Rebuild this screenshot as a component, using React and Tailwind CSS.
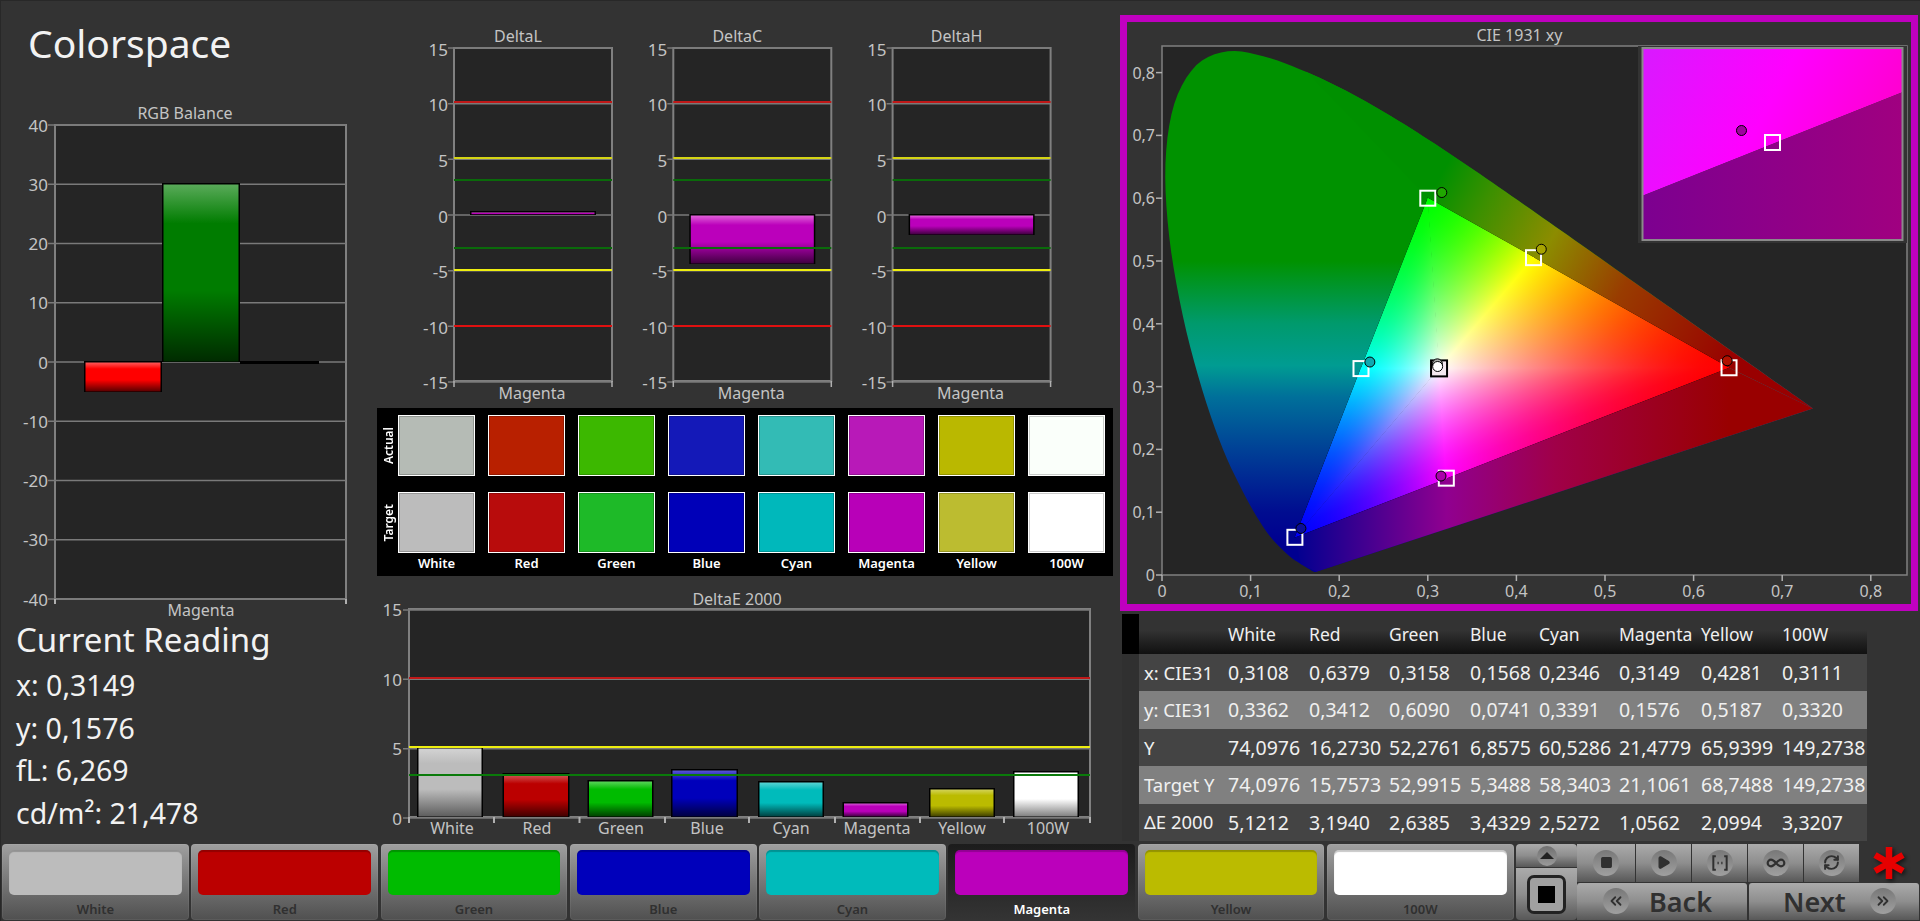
import { ChevronsLeft, ChevronsRight, Infinity as InfinityIcon, Play, RefreshCw, Square } from 'lucide-react'

const NAMES = ['White', 'Red', 'Green', 'Blue', 'Cyan', 'Magenta', 'Yellow', '100W']
const COLORS = ['#bcbcbc', '#bb0000', '#00bb00', '#0000bb', '#00bbbb', '#bb00bb', '#bbbb00', '#ffffff']
const ACTUAL = ['#b5bbb5', '#b82000', '#3cb800', '#1419b8', '#33bbb5', '#b819b8', '#bab800', '#fafffa']
const TARGET = ['#bcbcbc', '#b80c0c', '#1eba28', '#0000b8', '#00b8bb', '#b800b8', '#bcbc30', '#ffffff']

const TABLE = [
  ['x: CIE31', '0,3108', '0,6379', '0,3158', '0,1568', '0,2346', '0,3149', '0,4281', '0,3111'],
  ['y: CIE31', '0,3362', '0,3412', '0,6090', '0,0741', '0,3391', '0,1576', '0,5187', '0,3320'],
  ['Y', '74,0976', '16,2730', '52,2761', '6,8575', '60,5286', '21,4779', '65,9399', '149,2738'],
  ['Target Y', '74,0976', '15,7573', '52,9915', '5,3488', '58,3403', '21,1061', '68,7488', '149,2738'],
  ['ΔE 2000', '5,1212', '3,1940', '2,6385', '3,4329', '2,5272', '1,0562', '2,0994', '3,3207'],
]

// CIE 1931 spectral locus
const LOCUS_RAW = [
  [0.1741, 0.005], [0.1733, 0.0048], [0.1714, 0.0051], [0.1689, 0.0069], [0.1644, 0.0109], [0.1566, 0.0177],
  [0.144, 0.0297], [0.1241, 0.0578], [0.1096, 0.0868], [0.0913, 0.1327], [0.0687, 0.2007], [0.0454, 0.295],
  [0.0235, 0.4127], [0.0082, 0.5384], [0.0039, 0.6548], [0.0139, 0.7502], [0.0389, 0.812], [0.0743, 0.8338],
  [0.1142, 0.8262], [0.1547, 0.8059], [0.1929, 0.7816], [0.2296, 0.7543], [0.2658, 0.7243], [0.3016, 0.6923],
  [0.3373, 0.6589], [0.3731, 0.6245], [0.4087, 0.5896], [0.4441, 0.5547], [0.4788, 0.5202], [0.5125, 0.4866],
  [0.5448, 0.4544], [0.5752, 0.4242], [0.6029, 0.3965], [0.627, 0.3725], [0.6658, 0.334], [0.6915, 0.3083],
  [0.7079, 0.292], [0.726, 0.274], [0.7347, 0.2653],
]

// catmull-rom between the table points, the rim looks faceted otherwise
const smooth = (list) => {
  const out = []
  for (let i = 0; i < list.length - 1; i++) {
    const p0 = list[Math.max(i - 1, 0)]
    const p1 = list[i]
    const p2 = list[i + 1]
    const p3 = list[Math.min(i + 2, list.length - 1)]
    for (let s = 0; s < 5; s++) {
      const t = s / 5
      out.push([0, 1].map((k) =>
        0.5 * (2 * p1[k] + (p2[k] - p0[k]) * t + (2 * p0[k] - 5 * p1[k] + 4 * p2[k] - p3[k]) * t * t + (3 * p1[k] - p0[k] - 3 * p2[k] + p3[k]) * t * t * t),
      ))
    }
  }
  out.push(list[list.length - 1])
  return out
}

const LOCUS = smooth(LOCUS_RAW)

const cieX = (x) => 1162 + 886 * x
const cieY = (y) => 575 - 628 * y
const toPx = ([x, y]) => [cieX(x), cieY(y)]
const points = (list) => list.map((p) => toPx(p).join(',')).join(' ')

const WHITE = [0.3127, 0.329]
const R = [0.64, 0.33]
const G = [0.3, 0.6]
const B = [0.15, 0.06]
const C = [0.2246, 0.3287]
const M = [0.3209, 0.1542]
const Y = [0.4193, 0.5053]

// foot of the perpendicular, in page pixels: that is the space the gradients live in
const footOn = (p, a, b) => {
  const t = ((p[0] - a[0]) * (b[0] - a[0]) + (p[1] - a[1]) * (b[1] - a[1])) / ((b[0] - a[0]) ** 2 + (b[1] - a[1]) ** 2)
  return [a[0] + t * (b[0] - a[0]), a[1] + t * (b[1] - a[1])]
}

const channelColor = (channel, v) => {
  const n = Math.round(255 * v)
  return `rgb(${channel === 'r' ? n : 0},${channel === 'g' ? n : 0},${channel === 'b' ? n : 0})`
}

const GAMMA = 1.6

// each sector of the gamut: primary, neighbouring secondary, and the channels they switch on
const makeSector = (id, prim, sec, p, q, r) => {
  const [a, b, c] = [toPx(prim), toPx(sec), toPx(WHITE)]
  const cx = (a[0] + b[0] + c[0]) / 3
  const cy = (a[1] + b[1] + c[1]) / 3
  const grown = [a, b, c].map(([x, y]) => {
    const d = Math.hypot(x - cx, y - cy)
    return [x + ((x - cx) / d) * 0.8, y + ((y - cy) / d) * 0.8].join(',')
  })
  return {
    id,
    shape: grown.join(' '),
    fills: { [p]: channelColor(p, 1), [q]: `url(#${id}-q)`, [r]: `url(#${id}-r)` },
    ramps: [
      { id: `${id}-q`, channel: q, from: a, to: footOn(a, b, c) },
      { id: `${id}-r`, channel: r, from: footOn(c, a, b), to: c },
    ],
  }
}

const SECTORS = [
  makeSector('s1', R, Y, 'r', 'g', 'b'),
  makeSector('s2', G, Y, 'g', 'r', 'b'),
  makeSector('s3', G, C, 'g', 'b', 'r'),
  makeSector('s4', B, C, 'b', 'g', 'r'),
  makeSector('s5', B, M, 'b', 'r', 'g'),
  makeSector('s6', R, M, 'r', 'b', 'g'),
]

const mix = (hex, target, amount) => {
  const part = (i) => parseInt(hex.slice(i, i + 2), 16)
  const out = [1, 3, 5].map((i) => Math.round(part(i) + (target - part(i)) * amount))
  return `rgb(${out.join(',')})`
}

const Label = ({ x, y, anchor = 'middle', className = 'fill-[#c4c4c4] text-[16px]', children }) => (
  <text x={x} y={y} textAnchor={anchor} dominantBaseline="central" className={className}>
    {children}
  </text>
)

const BarGradients = ({ prefix, colors, dark = 0.65 }) => (
  <defs>
    {colors.map((color, i) => (
      <linearGradient key={i} id={`${prefix}-${i}`} x1="0" y1="0" x2="0" y2="1">
        <stop offset="0" stopColor={mix(color, 255, 0.35)} />
        <stop offset="0.22" stopColor={color} />
        <stop offset="0.6" stopColor={color} />
        <stop offset="1" stopColor={mix(color, 0, color === '#ffffff' || color === '#bcbcbc' ? 0.5 : dark)} />
      </linearGradient>
    ))}
  </defs>
)

const Bar = ({ x, y, w, h, fill }) => (
  <g>
    <rect x={x} y={y} width={w} height={h} fill="#000" />
    <rect x={x + 1.5} y={y + 1.5} width={w - 3} height={h - 2} fill={fill} />
  </g>
)

const RgbBalance = () => {
  const yAt = (v) => 362 - v * 5.925
  return (
    <svg viewBox="0 100 375 520" className="h-[520px] w-[375px]">
      <BarGradients prefix="rgb" colors={['#ff0000', '#007c00']} />
      <Label x={185} y={113}>RGB Balance</Label>
      <rect x={55} y={125} width={291} height={474} fill="#252525" stroke="#808080" strokeWidth="2" />
      {[40, 30, 20, 10, 0, -10, -20, -30, -40].map((v) => (
        <g key={v}>
          <line x1={48} x2={346} y1={yAt(v)} y2={yAt(v)} stroke="#7a7a7a" strokeWidth="1.5" />
          <Label x={48} y={yAt(v)} anchor="end" className="fill-[#c4c4c4] text-[17px]">{v}</Label>
        </g>
      ))}
      <line x1={55} x2={55} y1={599} y2={604} stroke="#b0b0b0" strokeWidth="2" />
      <line x1={346} x2={346} y1={599} y2={604} stroke="#b0b0b0" strokeWidth="2" />
      <Bar x={84} y={361} w={78} h={31} fill="url(#rgb-0)" />
      <Bar x={162} y={183} w={78} h={179} fill="url(#rgb-1)" />
      <rect x={240} y={361} width={79} height={3} fill="#000" />
      <Label x={201} y={610}>Magenta</Label>
    </svg>
  )
}

const DeltaChart = ({ index, title, barY, barH }) => {
  const left = 454 + index * 219.3
  const right = left + 158
  const yAt = (v) => 215 - v * 11.13
  const origin = 393 + index * 219
  return (
    <svg viewBox={`${origin} 0 219 400`} className="h-[400px] w-[219px] overflow-visible">
      <defs>
        <linearGradient id={`delta-${index}`} x1="0" y1="0" x2="0" y2="1">
          <stop offset="0" stopColor="#e060d8" />
          <stop offset="0.2" stopColor="#bb00bb" />
          <stop offset="0.55" stopColor="#bb00bb" />
          <stop offset="1" stopColor="#400040" />
        </linearGradient>
      </defs>
      <Label x={left + 64} y={36}>{title}</Label>
      <rect x={left} y={48} width={158} height={333} fill="#252525" stroke="#808080" strokeWidth="2" />
      {[15, 10, 5, 0, -5, -10, -15].map((v) => (
        <g key={v}>
          <line x1={left - 6} x2={right} y1={yAt(v)} y2={yAt(v)} stroke="#7a7a7a" strokeWidth="1.5" />
          <Label x={left - 6} y={yAt(v) + 1} anchor="end" className="fill-[#c4c4c4] text-[17px]">{v}</Label>
        </g>
      ))}
      <line x1={left} x2={left} y1={381} y2={387} stroke="#b0b0b0" strokeWidth="1.5" />
      <line x1={right} x2={right} y1={381} y2={387} stroke="#b0b0b0" strokeWidth="1.5" />
      <Bar x={left + 16} y={barY} w={126} h={barH} fill={`url(#delta-${index})`} />
      <line x1={left} x2={right} y1={102} y2={102} stroke="#c01818" strokeWidth="2" />
      <line x1={left} x2={right} y1={158} y2={158} stroke="#d4d414" strokeWidth="2" />
      <line x1={left} x2={right} y1={180} y2={180} stroke="#0a6a0a" strokeWidth="2" />
      <line x1={left} x2={right} y1={248} y2={248} stroke="#0a6a0a" strokeWidth="2" />
      <line x1={left} x2={right} y1={270} y2={270} stroke="#eeee10" strokeWidth="2" />
      <line x1={left} x2={right} y1={326} y2={326} stroke="#e01010" strokeWidth="2" />
      <Label x={left + 78} y={393}>Magenta</Label>
    </svg>
  )
}

const Swatches = () => (
  <div className="ml-[2px] mt-[8px] flex h-[168px] w-[736px] bg-black pt-[7px] font-semibold text-white">
    <div className="flex w-[21px] flex-col gap-[16px] pl-[2px]">
      {['Actual', 'Target'].map((name) => (
        <div key={name} className="flex h-[61px] items-center justify-center">
          <span className="rotate-180 text-[12px] leading-none [writing-mode:vertical-lr]">{name}</span>
        </div>
      ))}
    </div>
    <div className="grid grid-cols-[repeat(8,77px)] grid-rows-[61px_61px_auto] gap-x-[13px] gap-y-[16px]">
      {ACTUAL.map((c, i) => (
        <div key={i} className="border border-white shadow-[inset_0_0_0_1px_rgba(0,0,0,0.2)]" style={{ backgroundColor: c }} />
      ))}
      {TARGET.map((c, i) => (
        <div key={i} className="border border-white shadow-[inset_0_0_0_1px_rgba(0,0,0,0.2)]" style={{ backgroundColor: c }} />
      ))}
      {NAMES.map((name) => (
        <div key={name} className="-mt-[16px] pt-[1px] text-center text-[13px] leading-[18px]">{name}</div>
      ))}
    </div>
  </div>
)

const DeltaE = () => {
  const bars = [
    [417, 66, 747], [502.5, 67, 773], [587.5, 66, 780], [671, 67, 769],
    [758, 66, 781], [842.5, 66, 802], [929, 66, 788], [1013, 66, 771],
  ]
  const ticks = [409, 494, 579.5, 665, 749, 835, 920, 1004, 1090]
  const labels = [452, 537, 621, 707, 791, 877, 962, 1048]
  const yAt = (v) => 817 - v * 13.87
  return (
    <svg viewBox="375 580 745 263" className="mt-[4px] h-[263px] w-[745px]">
      <BarGradients prefix="de" colors={COLORS} />
      <Label x={737} y={599}>DeltaE 2000</Label>
      <rect x={409} y={609} width={681} height={208} fill="#252525" stroke="#808080" strokeWidth="2" />
      {[15, 10, 5, 0].map((v) => (
        <g key={v}>
          <line x1={403} x2={1090} y1={yAt(v) + 1} y2={yAt(v) + 1} stroke="#7a7a7a" strokeWidth="1.5" />
          <Label x={402} y={yAt(v) + 1} anchor="end" className="fill-[#c4c4c4] text-[17px]">{v}</Label>
        </g>
      ))}
      {ticks.map((x) => (
        <line key={x} x1={x} x2={x} y1={817} y2={823} stroke="#b0b0b0" strokeWidth="2" />
      ))}
      {bars.map(([x, w, top], i) => (
        <Bar key={i} x={x} y={top} w={w} h={817 - top} fill={`url(#de-${i})`} />
      ))}
      <line x1={409} x2={1090} y1={678} y2={678} stroke="#c01818" strokeWidth="2" />
      <line x1={409} x2={1090} y1={747} y2={747} stroke="#eeee10" strokeWidth="2" />
      <line x1={409} x2={1090} y1={775} y2={775} stroke="#0a7a0a" strokeWidth="2" />
      {NAMES.map((name, i) => (
        <Label key={name} x={labels[i]} y={828}>{name}</Label>
      ))}
    </svg>
  )
}

const TargetBox = ({ x, y, fill = 'none' }) => (
  <rect x={x - 7.5} y={y - 7.5} width={15} height={15} fill={fill} stroke="#fff" strokeWidth="2" />
)

const ramp = (r) => (
  <linearGradient key={r.id} id={r.id} gradientUnits="userSpaceOnUse" x1={r.from[0]} y1={r.from[1]} x2={r.to[0]} y2={r.to[1]}>
    {[0, 0.1, 0.2, 0.3, 0.4, 0.5, 0.6, 0.7, 0.8, 0.9, 1].map((t) => (
      <stop key={t} offset={t} stopColor={channelColor(r.channel, t ** GAMMA)} />
    ))}
  </linearGradient>
)

const CieChart = () => {
  const targets = [R, G, B, C, M, Y]
  const readings = [
    [0.3108, 0.3362, '#a8aca8'], [0.6379, 0.3412, '#b01000'], [0.3158, 0.609, '#20a800'], [0.1568, 0.0741, '#0a0e98'],
    [0.2346, 0.3391, '#10a8b0'], [0.3149, 0.1576, '#aa00aa'], [0.4281, 0.5187, '#a8a400'], [0.3111, 0.332, '#ffffff'],
  ]
  const ticks = [0, 0.1, 0.2, 0.3, 0.4, 0.5, 0.6, 0.7, 0.8]
  const tickText = (v) => (v === 0 ? '0' : v.toFixed(1).replace('.', ','))
  const upper = [G, ...LOCUS.filter((p, i) => i > LOCUS.length / 2), R]
  const lower = [B, [0.1566, 0.0177], LOCUS[0], LOCUS[LOCUS.length - 1], R]
  return (
    <svg viewBox="1127 22 784 582" className="h-[582px] w-[784px]">
      <defs>
        {SECTORS.flatMap((s) => s.ramps).map(ramp)}
        <linearGradient id="outer-left" gradientUnits="userSpaceOnUse" x1="0" x2="0" y1={cieY(0.5)} y2={cieY(0.05)}>
          <stop offset="0" stopColor="#009200" />
          <stop offset="0.22" stopColor="#009a6c" />
          <stop offset="0.37" stopColor="#009c92" />
          <stop offset="0.48" stopColor="#00709a" />
          <stop offset="0.67" stopColor="#004096" />
          <stop offset="0.89" stopColor="#000c90" />
          <stop offset="1" stopColor="#000090" />
        </linearGradient>
        <linearGradient id="outer-top" gradientUnits="userSpaceOnUse" x1={cieX(G[0])} y1={cieY(G[1])} x2={cieX(R[0])} y2={cieY(R[1])}>
          <stop offset="0" stopColor="#009000" />
          <stop offset="0.15" stopColor="#3c9000" />
          <stop offset="0.37" stopColor="#8c8c00" />
          <stop offset="0.62" stopColor="#993c00" />
          <stop offset="1" stopColor="#990000" />
        </linearGradient>
        <linearGradient id="outer-low" gradientUnits="userSpaceOnUse" x1={cieX(B[0])} y1={0} x2={cieX(R[0])} y2={0}>
          <stop offset="0" stopColor="#000090" />
          <stop offset="0.35" stopColor="#900090" />
          <stop offset="0.6" stopColor="#a00048" />
          <stop offset="1" stopColor="#990000" />
        </linearGradient>
        <linearGradient id="inset-top" x1="0" y1="0" x2="1" y2="0.3">
          <stop offset="0" stopColor="#d81aff" />
          <stop offset="0.55" stopColor="#ff00ff" />
          <stop offset="1" stopColor="#ff00d0" />
        </linearGradient>
        <linearGradient id="inset-low" x1="0" y1="0" x2="1" y2="0">
          <stop offset="0" stopColor="#7c0090" />
          <stop offset="1" stopColor="#a00080" />
        </linearGradient>
      </defs>
      <Label x={1519.5} y={35}>CIE 1931 xy</Label>
      <rect x={1162} y={46} width={745} height={529} fill="#252525" stroke="#808080" strokeWidth="1.5" />
      {ticks.map((v) => (
        <g key={v}>
          <line x1={1156} x2={1162} y1={cieY(v)} y2={cieY(v)} stroke="#b0b0b0" strokeWidth="1.5" />
          <line x1={cieX(v)} x2={cieX(v)} y1={575} y2={581} stroke="#b0b0b0" strokeWidth="1.5" />
          <Label x={1155} y={cieY(v)} anchor="end">{tickText(v)}</Label>
          <Label x={cieX(v)} y={591}>{tickText(v)}</Label>
        </g>
      ))}
      <polygon points={points(LOCUS)} fill="url(#outer-left)" />
      <polygon points={points(upper)} fill="url(#outer-top)" />
      <polygon points={points(lower)} fill="url(#outer-low)" />
      <g className="isolate">
        <polygon points={points([R, G, B])} fill="#000" />
        {['r', 'g', 'b'].map((channel) => (
          <g key={channel} className="mix-blend-screen">
            {SECTORS.map((s) => (
              <polygon key={s.id} points={s.shape} fill={s.fills[channel]} />
            ))}
          </g>
        ))}
      </g>
      {targets.map(([x, y]) => (
        <TargetBox key={x} x={cieX(x)} y={cieY(y)} />
      ))}
      <rect x={cieX(0.3127) - 8} y={cieY(0.329) - 8} width={16} height={16} fill="#f4e8f0" stroke="#000" strokeWidth="2" />
      {readings.map(([x, y, c]) => (
        <circle key={x} cx={cieX(x)} cy={cieY(y)} r={5} fill={c} stroke="#000" strokeWidth="1" />
      ))}
      <rect x={1638} y={46} width={269} height={197} fill="#333" />
      <polygon points="1642,48 1903,48 1903,92 1642,196" fill="url(#inset-top)" />
      <polygon points="1642,196 1903,92 1903,240 1642,240" fill="url(#inset-low)" />
      <rect x={1642.5} y={48} width={260} height={192} fill="none" stroke="#8a8a8a" strokeWidth="2" />
      <circle cx={1741.5} cy={130.5} r={5} fill="#a000a0" stroke="#000" strokeWidth="1" />
      <TargetBox x={1772.5} y={142.5} />
    </svg>
  )
}

const GRID = 'grid grid-cols-[17px_89px_81px_80px_81px_69px_80px_82px_81px_85px]'

const ReadingTable = () => (
  <div className="ml-[2px] mt-[3px] w-[745px] text-[19.5px] text-[#f0f0f0]">
    <div className={`${GRID} h-[40px] items-center bg-linear-to-b from-[#333333] from-40% to-[#111111] text-[17.5px]`}>
      <div className="h-full bg-black" />
      <div />
      {NAMES.map((name) => (
        <div key={name}>{name}</div>
      ))}
    </div>
    {TABLE.map((row, i) => (
      <div key={row[0]} className={`${GRID} h-[37.4px] items-center ${i % 2 ? 'bg-[#808080]' : 'bg-[#444444]'}`}>
        <div className="h-full bg-[#303030]" />
        {row.map((cell, j) => (
          <div key={j} className={j === 0 ? 'pl-[5px] text-[18.5px]' : ''}>{cell}</div>
        ))}
      </div>
    ))}
  </div>
)

const ColorButton = ({ name, color, active }) => (
  <div
    className={`flex w-[187px] flex-col items-center rounded-[4px] px-[7px] pt-[6px] ${
      active
        ? 'bg-linear-to-b from-[#1c1c1c] to-[#343434] text-white'
        : 'bg-linear-to-b from-[#a0a0a0] to-[#505050] text-[#303030] shadow-[inset_0_0_0_1px_rgba(255,255,255,0.06)]'
    }`}
  >
    <div className="h-[45px] w-full rounded-[5px] shadow-[inset_0_2px_1px_rgba(0,0,0,0.22)]" style={{ backgroundColor: color }} />
    <div className="mt-[6px] text-[13px] font-semibold leading-[16px]">{name}</div>
  </div>
)

const Knob = ({ children, className = '' }) => (
  <span className={`flex size-[26px] shrink-0 items-center justify-center rounded-full bg-linear-to-b from-[#787878] to-[#a0a0a0] text-[#303030] ${className}`}>
    {children}
  </span>
)

const metal = 'bg-linear-to-b from-[#ababab] via-[#8e8e8e] to-[#585858]'

const FitIcon = () => (
  <svg viewBox="0 0 24 24" className="size-[20px]" fill="none" stroke="currentColor" strokeWidth="2.4">
    <path d="M7 4H4v16h3M17 4h3v16h-3" />
    <path d="M9 12h1.5M13.5 12H15" strokeWidth="3" />
  </svg>
)

const Asterisk = () => (
  <svg viewBox="0 0 34 34" className="size-[34px] drop-shadow-[2px_2px_2px_rgba(0,0,0,0.6)]" stroke="#e60000" strokeWidth="6.5">
    <path d="M17 1v32M3 9l28 16M3 25L31 9" />
  </svg>
)

const Controls = () => (
  <div className="flex text-[#303030]">
    <div className="flex w-[61px] flex-col gap-[1px]">
      <div className={`flex h-[23px] items-center justify-center rounded-t-[4px] ${metal}`}>
        <span className="flex size-[20px] items-center justify-center rounded-full bg-linear-to-b from-[#707070] to-[#9a9a9a]">
          <span className="h-0 w-0 border-x-[7px] border-b-[7px] border-x-transparent border-b-[#222222]" />
        </span>
      </div>
      <div className={`flex flex-1 items-center justify-center rounded-b-[4px] ${metal}`}>
        <span className="flex size-[39px] items-center justify-center rounded-[7px] border-[3px] border-[#222222] bg-[#a0a0a0]">
          <span className="size-[17px] bg-black" />
        </span>
      </div>
    </div>
    <div className="flex w-[343px] flex-col gap-[1px]">
      <div className="flex h-[38px] gap-[1px]">
        {[
          <Square key="s" size={13} fill="currentColor" />,
          <Play key="p" size={15} fill="currentColor" />,
          <FitIcon key="f" />,
          <InfinityIcon key="i" size={20} strokeWidth={2.6} />,
          <RefreshCw key="r" size={17} strokeWidth={2.8} />,
        ].map((icon, i) => (
          <div key={i} className={`flex items-center justify-center ${i === 0 ? 'w-[58px]' : 'w-[55px]'} ${metal}`}>
            <Knob>{icon}</Knob>
          </div>
        ))}
        <div className="flex flex-1 items-center justify-center pr-[3px]">
          <Asterisk />
        </div>
      </div>
      <div className="flex h-[38px] gap-[2px] text-[27px] font-semibold">
        <div className={`flex w-[170px] items-center gap-[20px] rounded-t-[3px] pl-[26px] ${metal}`}>
          <Knob><ChevronsLeft size={18} strokeWidth={2.4} /></Knob>
          <span className="leading-none">Back</span>
        </div>
        <div className={`flex w-[170px] items-center justify-between rounded-t-[3px] pl-[34px] pr-[23px] ${metal}`}>
          <span className="leading-none">Next</span>
          <Knob><ChevronsRight size={18} strokeWidth={2.4} /></Knob>
        </div>
      </div>
    </div>
  </div>
)

export default function App() {
  return (
    <div className="flex h-[921px] w-[1920px] flex-col overflow-hidden bg-[#333333] font-['Noto_Sans',sans-serif] shadow-[inset_1px_1px_0_#282828]">
      <div className="flex h-[843px]">
        <div className="w-[375px]">
          <h1 className="h-[100px] pl-[28px] pt-[18px] text-[39px] font-normal leading-[50px] text-[#f2f2f2]">Colorspace</h1>
          <RgbBalance />
          <div className="pl-[16px] text-[#f2f2f2]">
            <div className="mb-[4px] text-[33px] leading-[40px]">Current Reading</div>
            {['x: 0,3149', 'y: 0,1576', 'fL: 6,269', 'cd/m²: 21,478'].map((line) => (
              <div key={line} className="text-[28.5px] leading-[42.5px]">{line}</div>
            ))}
          </div>
        </div>
        <div className="w-[745px]">
          <div className="flex pl-[18px]">
            <DeltaChart index={0} title="DeltaL" barY={211} barH={4} />
            <DeltaChart index={1} title="DeltaC" barY={214} barH={50} />
            <DeltaChart index={2} title="DeltaH" barY={214} barH={21} />
          </div>
          <Swatches />
          <DeltaE />
        </div>
        <div className="w-[800px]">
          <div className="mt-[15px] h-[596px] w-[798px] border-[7px] border-[#bf00bf]">
            <CieChart />
          </div>
          <ReadingTable />
        </div>
      </div>
      <div className="flex h-[78px] gap-[2.3px] pb-[1px] pl-[2px] pt-[1px]">
        {NAMES.map((name, i) => (
          <ColorButton key={name} name={name} color={COLORS[i]} active={name === 'Magenta'} />
        ))}
        <Controls />
      </div>
    </div>
  )
}
